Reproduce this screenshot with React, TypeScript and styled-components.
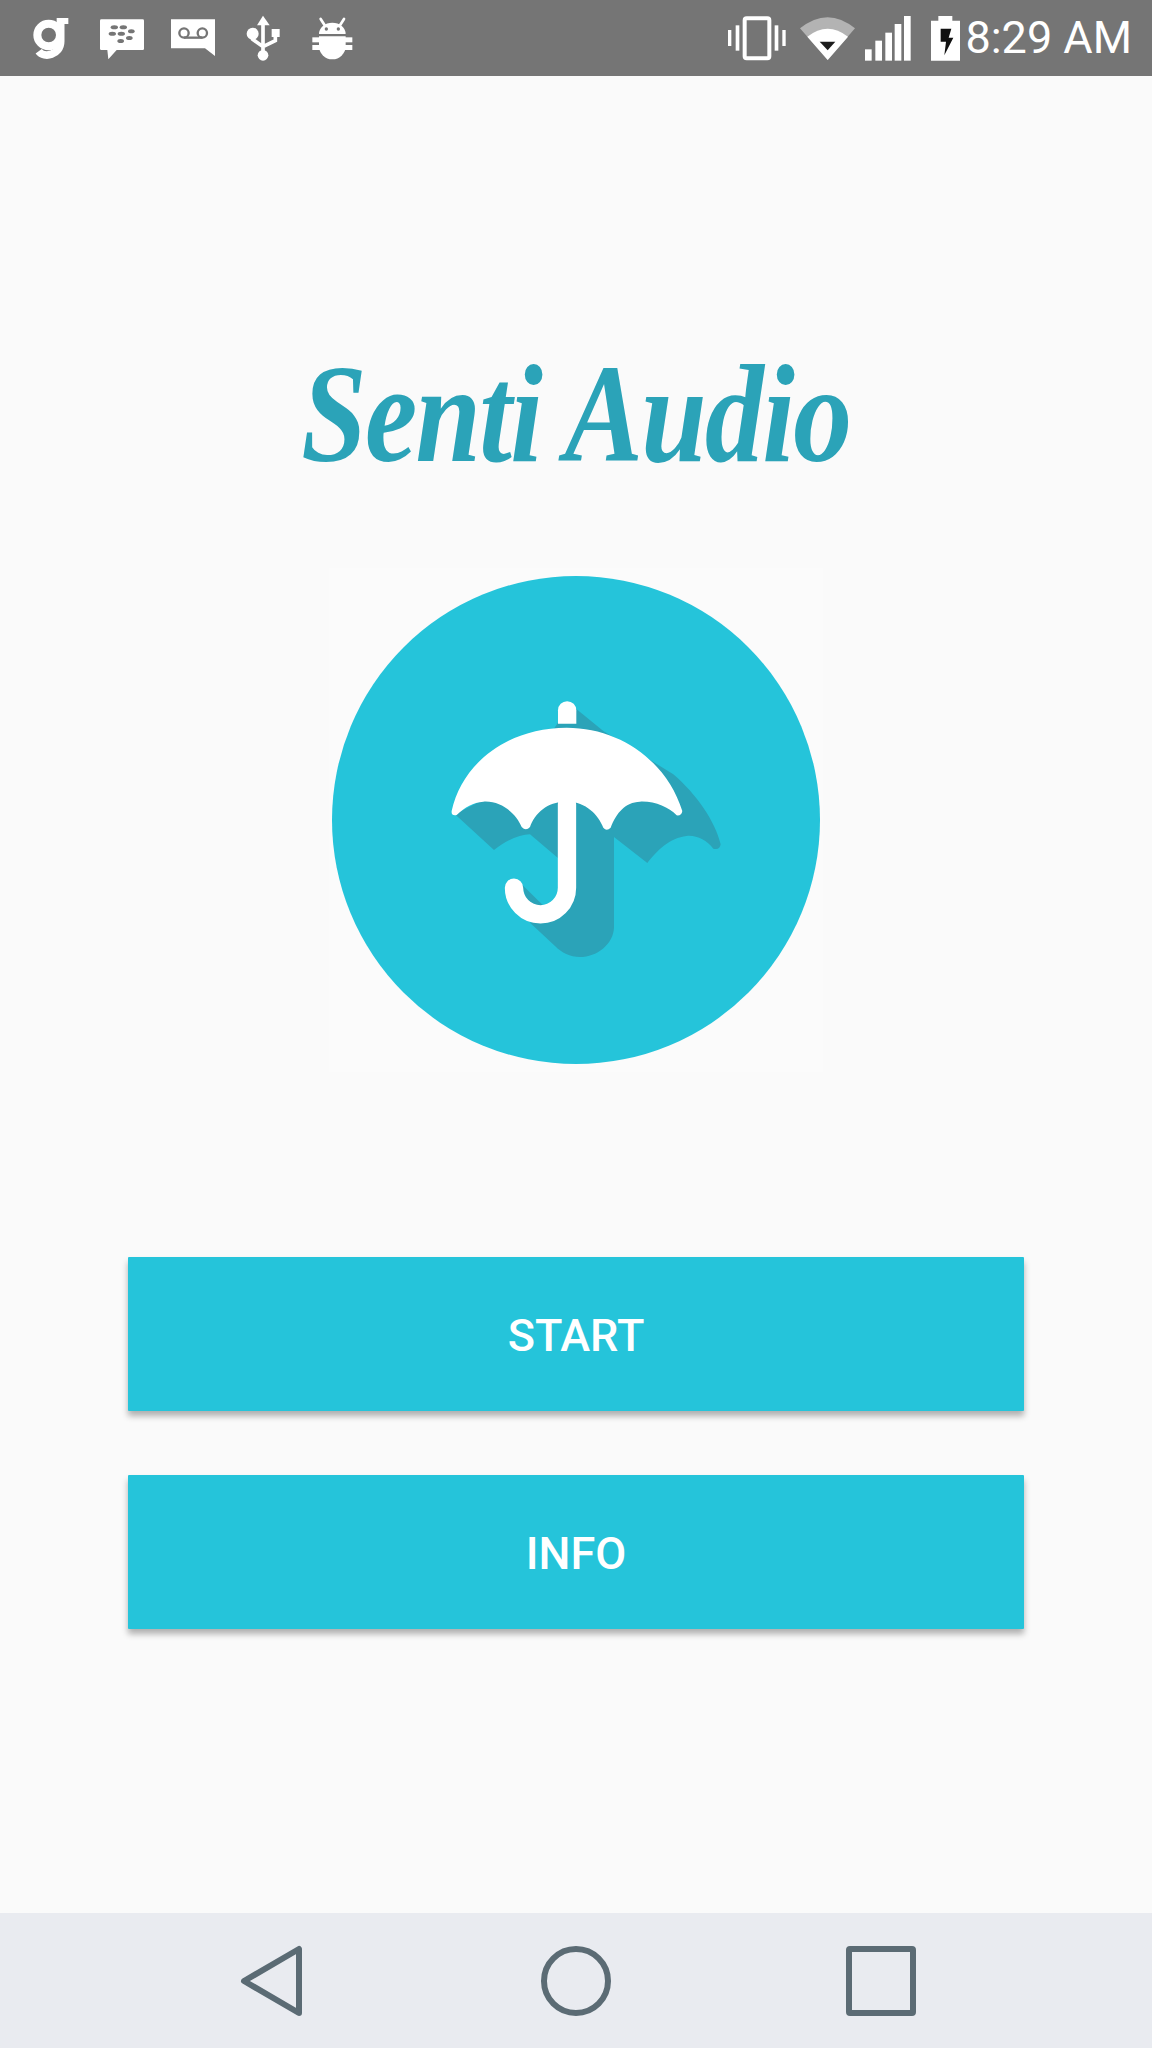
import React from 'react';
import styled, { createGlobalStyle } from 'styled-components';

const GlobalStyle = createGlobalStyle`
  html, body {
    margin: 0;
    padding: 0;
    background: #fafafa;
  }
  * {
    box-sizing: border-box;
  }
`;

const Screen = styled.div`
  width: 1152px;
  height: 2048px;
  display: flex;
  flex-direction: column;
  background: #fafafa;
  font-family: Roboto, 'Liberation Sans', sans-serif;
  overflow: hidden;
`;

const StatusBar = styled.div`
  height: 76px;
  flex: none;
  display: flex;
  align-items: center;
  justify-content: space-between;
  background: #757575;
  padding: 0 20px 0 15px;
`;

const StatusGroup = styled.div`
  display: flex;
  align-items: center;
`;

const RightGroup = styled(StatusGroup)`
  gap: 10px;
`;

const NotifySlot = styled.div`
  width: 71px;
  height: 48px;
  display: flex;
  justify-content: center;
`;

const Clock = styled.span`
  margin-left: -5px;
  color: #fff;
  font-size: 45px;
  line-height: 76px;
  white-space: nowrap;
`;

const Main = styled.main`
  flex: 1;
  display: flex;
  flex-direction: column;
  align-items: center;
`;

const Title = styled.h1`
  margin: 268px 0 0;
  height: 142px;
  font-family: 'Liberation Serif', serif;
  font-style: italic;
  font-weight: 700;
  font-size: 140px;
  line-height: 140px;
  letter-spacing: -2px;
  white-space: nowrap;
  color: #2ba3b8;
  transform: scaleX(0.84);
`;

const LogoPlate = styled.div`
  margin-top: 82px;
  width: 494px;
  height: 504px;
  display: flex;
  align-items: center;
  justify-content: center;
  background: #fbfbfb;
`;

const Buttons = styled.div`
  margin-top: 185px;
  width: 896px;
  display: flex;
  flex-direction: column;
  gap: 64px;
`;

const ActionButton = styled.button`
  height: 154px;
  padding: 2px 0 0;
  border: 0;
  border-radius: 1px;
  background: #25c4da;
  color: #fff;
  font-family: Roboto, 'Liberation Sans', sans-serif;
  font-size: 45px;
  font-weight: 500;
  box-shadow: 0 5px 6px rgba(0, 0, 0, 0.3);
`;

const NavBar = styled.nav`
  height: 135px;
  flex: none;
  display: grid;
  grid-template-columns: repeat(3, 305px);
  justify-content: center;
  align-items: center;
  justify-items: center;
  background: #e9ebf0;
`;

const NOTIFY = '#757575';

const GIcon = () => (
  <svg width="48" height="48" viewBox="81 42 144 144">
    <circle cx="146" cy="105" r="34" fill="none" stroke="#fff" strokeWidth="24" />
    <path d="M182 66V124C182 165 132 176 116 154" fill="none" stroke="#fff" strokeWidth="23" />
    <rect x="170" y="54" width="35" height="18" fill="#fff" />
  </svg>
);

const BbmIcon = () => (
  <svg width="48" height="48" viewBox="294 42 144 144">
    <path d="M304 58H428Q432 58 432 62V146Q432 150 428 150H350L325 178L322 150H304Q300 150 300 146V62Q300 58 304 58Z" fill="#fff" />
    <g fill={NOTIFY}>
      <ellipse cx="343" cy="82" rx="11" ry="6" />
      <ellipse cx="370" cy="82" rx="11" ry="6" />
      <ellipse cx="337" cy="101" rx="11" ry="6" />
      <ellipse cx="364" cy="101" rx="11" ry="6" />
      <ellipse cx="394" cy="94" rx="10" ry="6" />
      <ellipse cx="388" cy="114" rx="10" ry="6" />
      <ellipse cx="362" cy="123" rx="10" ry="6" />
    </g>
  </svg>
);

const VoicemailIcon = () => (
  <svg width="48" height="48" viewBox="504 42 144 144">
    <path d="M510 58H642V168L612 145H510Z" fill="#fff" />
    <g fill="none" stroke={NOTIFY} strokeWidth="7">
      <circle cx="549" cy="99" r="14" />
      <circle cx="604" cy="99" r="14" />
      <path d="M549 113H604" />
    </g>
  </svg>
);

const UsbIcon = () => (
  <svg width="48" height="48" viewBox="719 42 144 144">
    <path d="M788 47L808 76H770Z" fill="#fff" />
    <path d="M788 70V165M757 105V118L788 140L825 122V108" fill="none" stroke="#fff" strokeWidth="11" />
    <circle cx="788" cy="166" r="16" fill="#fff" />
    <circle cx="757" cy="101" r="18" fill="#fff" />
    <rect x="814" y="87" width="24" height="24" fill="#fff" />
  </svg>
);

const AndroidIcon = () => (
  <svg width="48" height="48" viewBox="934 42 144 144">
    <path d="M958 102A40 34 0 0 1 1038 102Z" fill="#fff" />
    <path d="M975 76L963 57M1021 76L1033 57" stroke="#fff" strokeWidth="8" strokeLinecap="round" />
    <circle cx="980" cy="87" r="5" fill={NOTIFY} />
    <circle cx="1016" cy="87" r="5" fill={NOTIFY} />
    <path d="M958 109H1038V138A40 40 0 0 1 958 138Z" fill="#fff" />
    <rect x="938" y="112" width="120" height="15" fill="#fff" />
    <rect x="938" y="135" width="120" height="15" fill="#fff" />
  </svg>
);

const VibrateIcon = () => (
  <svg width="63" height="48" viewBox="81 42 189 144">
    <rect x="134" y="55" width="74" height="120" rx="6" fill="none" stroke="#fff" strokeWidth="12" />
    <g fill="#fff">
      <rect x="84" y="90" width="10" height="48" />
      <rect x="107" y="76" width="11" height="76" />
      <rect x="224" y="76" width="11" height="76" />
      <rect x="247" y="90" width="10" height="48" />
    </g>
  </svg>
);

const WifiIcon = () => (
  <svg width="55" height="48" viewBox="300 42 165 144">
    <path d="M383 180L300 85Q383 18 465 85Z" fill="#b3b3b3" />
    <path d="M383 180L322 110Q383 62 444 110Z" fill="#fff" />
    <path d="M359 125H406L383 151Z" fill="#1c1c1c" />
  </svg>
);

const SignalIcon = () => (
  <svg width="56" height="48" viewBox="495 42 168 144">
    <g fill="#fff">
      <rect x="495" y="148" width="20" height="34" />
      <rect x="526" y="122" width="20" height="60" />
      <rect x="556" y="98" width="20" height="84" />
      <rect x="584" y="72" width="20" height="110" />
      <rect x="612" y="48" width="20" height="134" />
    </g>
  </svg>
);

const BatteryIcon = () => (
  <svg width="29" height="48" viewBox="693 42 87 144">
    <path d="M715 48H757V62H780V182H693V62H715Z" fill="#fff" />
    <path d="M722 86H754L746 113H760L733 166L738 125H722Z" fill="#111" />
  </svg>
);

const BackIcon = () => (
  <svg width="80" height="80" viewBox="0 0 80 80">
    <path d="M68 8V72L13 40Z" fill="none" stroke="#5b6b74" strokeWidth="6" strokeLinejoin="round" />
  </svg>
);

const HomeIcon = () => (
  <svg width="80" height="80" viewBox="0 0 80 80">
    <circle cx="40" cy="40" r="32" fill="none" stroke="#5b6b74" strokeWidth="6" />
  </svg>
);

const RecentsIcon = () => (
  <svg width="80" height="80" viewBox="0 0 80 80">
    <rect x="8" y="8" width="64" height="64" rx="1" fill="none" stroke="#5b6b74" strokeWidth="6" strokeLinejoin="round" />
  </svg>
);

const AppLogo = () => (
  <svg width="488" height="488" viewBox="332 575 488 488">
    <circle cx="576" cy="819" r="244" fill="#25c4da" />
    <g transform="translate(420 680) scale(0.3333)">
      <path
        d="M470 85L550 150L760 280C830 340 885 420 902 490Q900 508 880 503C860 478 830 462 800 465C750 470 710 510 682 546L582 468V740C580 790 530 828 480 828C450 828 425 815 405 795L330 725L441 690V545L413 530L330 460C300 462 260 475 222 507L105 400L300 300L440 85Z"
        fill="#2ba3b8"
      />
      <path d="M305 610L372 676L330 690Z" fill="#2ba3b8" />
      <path
        d="M441 370V620A79.5 80 0 0 1 282 620"
        fill="none"
        stroke="#fff"
        strokeWidth="55"
        strokeLinecap="round"
      />
      <path
        d="M95 390C125 250 260 140 440 140C600 140 740 240 787 390Q785 405 770 403C745 378 705 360 660 362C615 364 590 395 572 440Q560 452 550 440C535 400 495 360 440 362C385 360 345 395 330 438Q318 452 305 438C290 400 245 358 190 362C160 364 135 378 110 402Q93 405 95 390Z"
        fill="#fff"
      />
      <path d="M414 128V88A27 27 0 0 1 469 88V128Z" fill="#fff" />
    </g>
  </svg>
);

const notifyIcons = [GIcon, BbmIcon, VoicemailIcon, UsbIcon, AndroidIcon];

const App = () => (
  <Screen>
    <GlobalStyle />
    <StatusBar>
      <StatusGroup>
        {notifyIcons.map((Icon, index) => (
          <NotifySlot key={index}>
            <Icon />
          </NotifySlot>
        ))}
      </StatusGroup>
      <RightGroup>
        <VibrateIcon />
        <WifiIcon />
        <SignalIcon />
        <BatteryIcon />
        <Clock>8:29 AM</Clock>
      </RightGroup>
    </StatusBar>
    <Main>
      <Title>Senti Audio</Title>
      <LogoPlate>
        <AppLogo />
      </LogoPlate>
      <Buttons>
        <ActionButton>START</ActionButton>
        <ActionButton>INFO</ActionButton>
      </Buttons>
    </Main>
    <NavBar>
      <BackIcon />
      <HomeIcon />
      <RecentsIcon />
    </NavBar>
  </Screen>
);

export default App;
